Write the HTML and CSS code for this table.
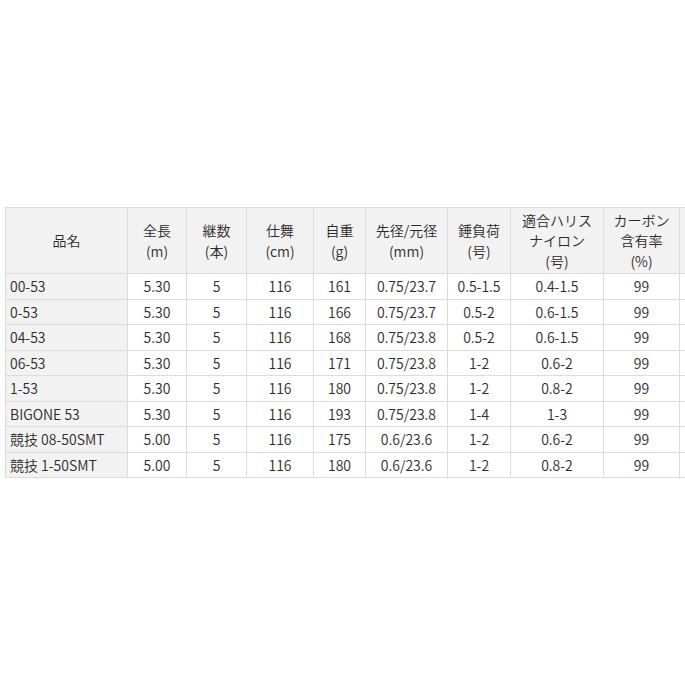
FILE: index.html
```html
<!DOCTYPE html>
<html lang="ja">
<head>
<meta charset="utf-8">
<link rel="stylesheet" href="styles.css">
</head>
<body>
<div class="wrap">
<table class="spec">
<colgroup>
<col class="c1"><col class="c2"><col class="c3"><col class="c4"><col class="c5"><col class="c6"><col class="c7"><col class="c8"><col class="c9"><col class="c10">
</colgroup>
<thead>
<tr>
<th>品名</th>
<th>全長<br>(m)</th>
<th>継数<br>(本)</th>
<th>仕舞<br>(cm)</th>
<th>自重<br>(g)</th>
<th>先径/元径<br>(mm)</th>
<th>錘負荷<br>(号)</th>
<th>適合ハリス<br>ナイロン<br>(号)</th>
<th>カーボン<br>含有率<br>(%)</th>
<th></th>
</tr>
</thead>
<tbody>
<tr><td class="name">00-53</td><td>5.30</td><td>5</td><td>116</td><td>161</td><td>0.75/23.7</td><td>0.5-1.5</td><td>0.4-1.5</td><td>99</td><td></td></tr>
<tr><td class="name">0-53</td><td>5.30</td><td>5</td><td>116</td><td>166</td><td>0.75/23.7</td><td>0.5-2</td><td>0.6-1.5</td><td>99</td><td></td></tr>
<tr><td class="name">04-53</td><td>5.30</td><td>5</td><td>116</td><td>168</td><td>0.75/23.8</td><td>0.5-2</td><td>0.6-1.5</td><td>99</td><td></td></tr>
<tr><td class="name">06-53</td><td>5.30</td><td>5</td><td>116</td><td>171</td><td>0.75/23.8</td><td>1-2</td><td>0.6-2</td><td>99</td><td></td></tr>
<tr><td class="name">1-53</td><td>5.30</td><td>5</td><td>116</td><td>180</td><td>0.75/23.8</td><td>1-2</td><td>0.8-2</td><td>99</td><td></td></tr>
<tr><td class="name">BIGONE 53</td><td>5.30</td><td>5</td><td>116</td><td>193</td><td>0.75/23.8</td><td>1-4</td><td>1-3</td><td>99</td><td></td></tr>
<tr><td class="name">競技 08-50SMT</td><td>5.00</td><td>5</td><td>116</td><td>175</td><td>0.6/23.6</td><td>1-2</td><td>0.6-2</td><td>99</td><td></td></tr>
<tr><td class="name">競技 1-50SMT</td><td>5.00</td><td>5</td><td>116</td><td>180</td><td>0.6/23.6</td><td>1-2</td><td>0.8-2</td><td>99</td><td></td></tr>
</tbody>
</table>
</div>
</body>
</html>
```
FILE: styles.css
```css
html, body {
  margin: 0;
  padding: 0;
  background: #fff;
}
body {
  font-family: "Noto Sans CJK JP", "Noto Sans", sans-serif;
  color: #2b2b2b;
  font-size: 14px;
}
.wrap {
  padding: 207px 0 0 5px;
  width: 680px;
  overflow: hidden;
}
.spec {
  border-collapse: collapse;
  table-layout: fixed;
  width: 740px;
}
.c1 { width: 122px; }
.c2 { width: 59px; }
.c3 { width: 60px; }
.c4 { width: 67px; }
.c5 { width: 52px; }
.c6 { width: 82px; }
.c7 { width: 63px; }
.c8 { width: 93px; }
.c9 { width: 76px; }
.c10 { width: 66px; }
.spec th, .spec td {
  border: 1px solid #dcdcdc;
  padding: 0 4px;
  text-align: center;
  vertical-align: middle;
  font-weight: 350;
  white-space: nowrap;
}
.spec th {
  background: #f2f2f2;
  height: 65px;
  line-height: 20.5px;
}
.spec td {
  height: 24.5px;
  line-height: 18px;
}
.spec td.name {
  background: #f2f2f2;
  text-align: left;
  padding-left: 4px;
}
```
